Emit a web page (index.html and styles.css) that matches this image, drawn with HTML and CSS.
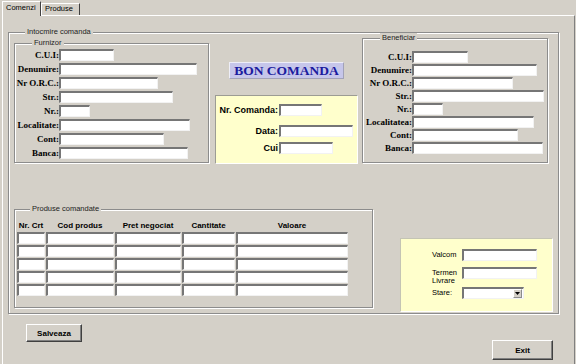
FILE: index.html
```html
<!DOCTYPE html>
<html lang="ro">

<head>
    <meta charset="UTF-8">
    <meta name="viewport" content="width=device-width, initial-scale=1.0">
    <title>Comenzi</title>
    <link rel="stylesheet" href="styles.css">
</head>

<body>
    <div class="tabs">
        <div class="tab active">Comenzi</div>
        <div class="tab">Produse</div>
    </div>

    <div class="page">
        <div class="group main">
            <span class="caption">Intocmire comanda</span>

            <div class="top-row">
                <!-- Furnizor -->
                <div class="group furnizor">
                    <span class="caption">Furnizor</span>
                    <div class="field"><label>C.U.I:</label><input class="inp w55" type="text"></div>
                    <div class="field"><label>Denumire:</label><input class="inp w138" type="text"></div>
                    <div class="field"><label>Nr O.R.C.:</label><input class="inp w99" type="text"></div>
                    <div class="field"><label>Str.:</label><input class="inp w114" type="text"></div>
                    <div class="field"><label>Nr.:</label><input class="inp w31" type="text"></div>
                    <div class="field"><label>Localitate:</label><input class="inp w131" type="text"></div>
                    <div class="field"><label>Cont:</label><input class="inp w105" type="text"></div>
                    <div class="field"><label>Banca:</label><input class="inp w129" type="text"></div>
                </div>

                <!-- Bon comanda -->
                <div class="middle">
                    <div class="title">BON COMANDA</div>
                    <div class="order">
                        <div class="order-row"><label>Nr. Comanda:</label><input class="inp w43" type="text"></div>
                        <div class="order-row date"><label>Data:</label><input class="inp w74" type="text"></div>
                        <div class="order-row cui"><label>Cui</label><input class="inp w54" type="text"></div>
                    </div>
                </div>

                <!-- Beneficiar -->
                <div class="group beneficiar">
                    <span class="caption">Beneficiar</span>
                    <div class="field"><label>C.U.I:</label><input class="inp w56" type="text"></div>
                    <div class="field"><label>Denumire:</label><input class="inp w125" type="text"></div>
                    <div class="field"><label>Nr O.R.C.:</label><input class="inp w101" type="text"></div>
                    <div class="field"><label>Str.:</label><input class="inp w132" type="text"></div>
                    <div class="field"><label>Nr.:</label><input class="inp w31" type="text"></div>
                    <div class="field"><label>Localitatea:</label><input class="inp w122" type="text"></div>
                    <div class="field"><label>Cont:</label><input class="inp w106" type="text"></div>
                    <div class="field"><label>Banca:</label><input class="inp w131" type="text"></div>
                </div>
            </div>

            <div class="bottom-row">
                <!-- Produse comandate -->
                <div class="group produse">
                    <span class="caption">Produse comandate</span>
                    <div class="grid">
                        <div class="head">Nr. Crt</div>
                        <div class="head">Cod produs</div>
                        <div class="head">Pret negociat</div>
                        <div class="head">Cantitate</div>
                        <div class="head">Valoare</div>

                        <input class="cell" type="text"><input class="cell" type="text"><input class="cell" type="text"><input class="cell" type="text"><input class="cell" type="text">
                        <input class="cell" type="text"><input class="cell" type="text"><input class="cell" type="text"><input class="cell" type="text"><input class="cell" type="text">
                        <input class="cell" type="text"><input class="cell" type="text"><input class="cell" type="text"><input class="cell" type="text"><input class="cell" type="text">
                        <input class="cell" type="text"><input class="cell" type="text"><input class="cell" type="text"><input class="cell" type="text"><input class="cell" type="text">
                        <input class="cell" type="text"><input class="cell" type="text"><input class="cell" type="text"><input class="cell" type="text"><input class="cell" type="text">
                    </div>
                </div>

                <!-- Valcom / termen / stare -->
                <div class="extra">
                    <div class="extra-row"><label>Valcom</label><input class="inp w75" type="text"></div>
                    <div class="extra-row term"><label>Termen Livrare</label><input class="inp w75" type="text"></div>
                    <div class="extra-row"><label>Stare:</label>
                        <div class="combo">
                            <span class="combo-btn">
                                <svg width="5" height="3" viewBox="0 0 5 3"><path d="M0 0H5L2.5 3Z" fill="#000"/></svg>
                            </span>
                        </div>
                    </div>
                </div>
            </div>
        </div>

        <div class="actions">
            <button class="btn save">Salveaza</button>
            <button class="btn exit">Exit</button>
        </div>
    </div>
</body>

</html>
```

FILE: styles.css
```css
/* General */
* {
    box-sizing: border-box;
}

body {
    margin: 0;
    height: 364px;
    overflow: hidden;
    background-color: #d4d0c8;
    font-family: 'Liberation Sans', Arial, sans-serif;
    font-size: 8px;
    color: #000;
}

/* Tabs */
.tabs {
    display: flex;
    align-items: flex-end;
    height: 15px;
    padding-left: 2px;
}

.tab {
    width: 39px;
    height: 12px;
    padding-left: 3px;
    font-size: 7.5px;
    line-height: 10px;
    background-color: #d4d0c8;
    border-top: 1px solid #fff;
    border-left: 1px solid #fff;
    border-right: 1px solid #404040;
}

.tab.active {
    height: 15px;
    margin-bottom: -1px;
    line-height: 12px;
    position: relative;
    z-index: 1;
}

.page {
    margin-left: 2px;
    width: 573px;
    height: 360px;
    border-top: 1px solid #fff;
    border-left: 1px solid #fff;
    border-right: 1px solid #808080;
}

/* Group boxes */
.group {
    position: relative;
    border: 1px solid #8c8c8c;
    box-shadow: inset 1px 1px 0 #fff, 1px 1px 0 #fff;
}

.caption {
    position: absolute;
    top: -6px;
    padding: 0 2px;
    background-color: #d4d0c8;
    font-size: 7.5px;
    line-height: 10px;
    color: #222;
    white-space: nowrap;
}

.main {
    margin: 16px 0 0 5px;
    width: 551px;
    height: 282px;
}

.main > .caption {
    left: 16px;
}

.top-row {
    display: flex;
    align-items: flex-start;
    height: 131px;
}

.bottom-row {
    display: flex;
    align-items: flex-start;
}

/* Inputs */
.inp,
.cell {
    display: block;
    margin: 0;
    padding: 0;
    height: 12px;
    background-color: #fff;
    border-style: solid;
    border-width: 2px 1px 1px 2px;
    border-color: #767676 #f2f2f2 #f2f2f2 #767676;
    font-size: 8px;
    outline: none;
}

.w31 { width: 31px; }
.w43 { width: 43px; }
.w54 { width: 54px; }
.w55 { width: 55px; }
.w56 { width: 56px; }
.w74 { width: 74px; }
.w75 { width: 75px; }
.w99 { width: 99px; }
.w101 { width: 101px; }
.w105 { width: 105px; }
.w106 { width: 106px; }
.w114 { width: 114px; }
.w122 { width: 122px; }
.w125 { width: 125px; }
.w129 { width: 129px; }
.w131 { width: 131px; }
.w132 { width: 132px; }
.w138 { width: 138px; }

/* Furnizor / Beneficiar */
.field {
    display: flex;
    align-items: flex-start;
    height: 14px;
}

.field label {
    width: 44px;
    text-align: right;
    font-family: 'Liberation Serif', 'Times New Roman', serif;
    font-weight: bold;
    font-size: 9px;
    line-height: 12px;
    white-space: nowrap;
}

.furnizor {
    margin: 10px 0 0 5px;
    width: 195px;
    height: 120px;
    padding-top: 5px;
}

.furnizor .caption {
    left: 17px;
}

.beneficiar {
    margin: 5px 0 0 4px;
    width: 186px;
    height: 125px;
    padding-top: 12px;
}

.beneficiar .caption {
    left: 17px;
}

.beneficiar .field {
    height: 13px;
}

.beneficiar .field label {
    width: 49px;
}

/* Bon comanda */
.middle {
    margin: 29px 0 0 6px;
    width: 143px;
    display: flex;
    flex-direction: column;
    align-items: center;
}

.title {
    width: 115px;
    height: 17px;
    background-color: #c6c6ea;
    color: #1b1b9e;
    font-family: 'Liberation Serif', 'Times New Roman', serif;
    font-weight: bold;
    font-size: 13.5px;
    line-height: 15px;
    text-align: center;
    border: 1px solid;
    border-color: #eeeef8 #a2a2b8 #a2a2b8 #eeeef8;
}

.order {
    margin-top: 16px;
    width: 143px;
    height: 69px;
    padding-top: 8px;
    background-color: #ffffcc;
    border: 1px solid;
    border-color: #9c9c94 #fff #fff #9c9c94;
}

.order-row {
    display: flex;
    height: 12px;
}

.order-row.date {
    margin-top: 9px;
}

.order-row.cui {
    margin-top: 5px;
}

.order-row label {
    width: 62px;
    margin-right: 1px;
    text-align: right;
    font-weight: bold;
    font-size: 9px;
    line-height: 12px;
    white-space: nowrap;
}

/* Produse comandate */
.produse {
    margin: 45px 0 0 5px;
    width: 359px;
    height: 99px;
    padding: 11px 0 0 2px;
}

.produse .caption {
    left: 15px;
}

.grid {
    display: grid;
    grid-template-columns: 28px 68px 66px 53px 112px;
    grid-template-rows: 10px repeat(5, 12px);
    gap: 1px;
}

.head {
    font-weight: bold;
    font-size: 8px;
    line-height: 10px;
    text-align: center;
    white-space: nowrap;
}

.cell {
    width: 100%;
}

/* Valcom box */
.extra {
    margin: 74px 0 0 27px;
    width: 153px;
    height: 74px;
    padding: 10px 0 0 31px;
    background-color: #ffffcc;
    border: 1px solid;
    border-color: #c4c4b4 #fff #fff #c4c4b4;
}

.extra-row {
    display: flex;
    align-items: flex-start;
}

.extra-row label {
    width: 30px;
    font-size: 7.5px;
    line-height: 12px;
}

.extra-row.term {
    margin-top: 6px;
    height: 20px;
}

.extra-row.term label {
    margin-top: 2px;
    line-height: 8px;
    padding-right: 3px;
}

.combo {
    display: flex;
    justify-content: flex-end;
    align-items: flex-start;
    width: 62px;
    height: 12px;
    padding-right: 1px;
    background-color: #fff;
    border-style: solid;
    border-width: 2px 1px 1px 2px;
    border-color: #767676 #f2f2f2 #f2f2f2 #767676;
}

.combo-btn {
    display: flex;
    align-items: center;
    justify-content: center;
    width: 9px;
    height: 9px;
    background-color: #d4d0c8;
    border: 1px solid;
    border-color: #fff #8c8c8c #8c8c8c #fff;
}

/* Buttons */
.actions {
    display: flex;
    align-items: flex-start;
}

.btn {
    padding: 0;
    background-color: #d4d0c8;
    border: 1px solid;
    border-color: #fff #404040 #404040 #fff;
    box-shadow: inset -1px -1px 0 #808080;
    font-family: 'Liberation Sans', Arial, sans-serif;
    font-weight: bold;
    font-size: 8px;
    color: #000;
}

.save {
    margin: 10px 0 0 23px;
    width: 56px;
    height: 18px;
}

.exit {
    margin: 26px 21px 0 auto;
    width: 61px;
    height: 20px;
}
```
